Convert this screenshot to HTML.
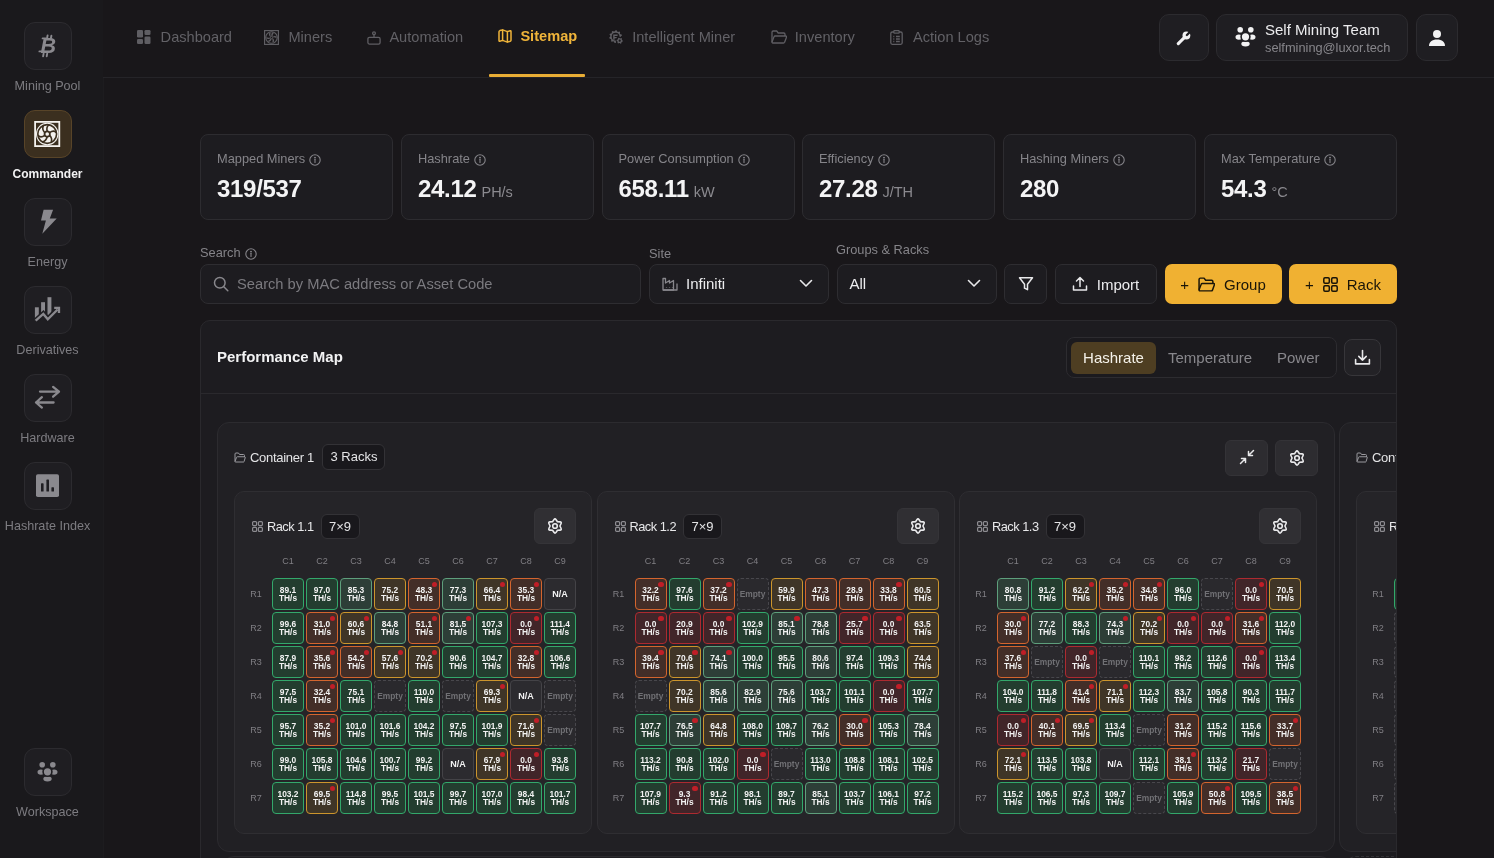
<!DOCTYPE html>
<html><head><meta charset="utf-8">
<style>
*{box-sizing:border-box;margin:0;padding:0}
html,body{width:1494px;height:858px;overflow:hidden;background:#19171a;font-family:"Liberation Sans",sans-serif;color:#e8e8ea}
.abs{position:absolute}
/* sidebar */
#side{position:absolute;left:0;top:0;width:103px;height:858px;background:#1a191c}
#vline{position:absolute;left:103px;top:78px;width:1px;height:780px;background:#1d1c1f}
.si{position:absolute;left:24px;width:48px;height:48px;border-radius:11px;background:#1f1e22;border:1px solid #2c2b2f}
.si.act{background:#3b2f1f;border-color:#584428}
.sl{position:absolute;left:0;width:95px;text-align:center;font-size:12.6px;color:#7d7c81;white-space:nowrap;margin-top:0.5px}
.sl.act{color:#f2f2f3;font-weight:bold;font-size:12px;margin-top:0.5px}
/* topbar */
#top{position:absolute;left:103px;top:0;width:1391px;height:78px;border-bottom:1px solid #252428}
.nav{position:absolute;top:27.6px;height:18px;font-size:14.6px;color:#626166;white-space:nowrap;line-height:18px}
.nav svg{position:absolute;left:0;top:2px}
.nav span{position:absolute;top:0}
.nav.act{color:#efb43a;font-weight:bold}
#uline{position:absolute;left:386px;top:74px;width:96px;height:3px;background:#e9ad35;border-radius:1px}
.tb{position:absolute;top:14px;height:47px;border-radius:10px;background:#1f1e22;border:1px solid #2c2b2f;display:flex;align-items:center;justify-content:center}
/* stats */
.card{position:absolute;top:134px;width:193px;height:86px;border-radius:8px;background:#1d1c20;border:1px solid #2d2c30}
.card .lab{position:absolute;left:16px;top:16px;font-size:12.8px;color:#858489;white-space:nowrap;line-height:15px}
.card .lab svg{vertical-align:-2.5px;margin-left:4px}
.flab svg{vertical-align:-3px}
.card .val{position:absolute;left:16px;top:40px;font-size:24px;font-weight:bold;color:#f4f4f5;white-space:nowrap;line-height:28px;letter-spacing:-0.3px}
.card .val small{font-size:14.5px;font-weight:normal;color:#8b8a8f;margin-left:5px;letter-spacing:-0.1px}
/* form */
.flab{position:absolute;font-size:12.8px;color:#858489;white-space:nowrap;line-height:15px}
.inp{position:absolute;top:264px;height:40px;border-radius:8px;background:#1d1c20;border:1px solid #2e2d31}
.btn{position:absolute;top:264px;height:40px;border-radius:7px;display:flex;align-items:center;justify-content:center;font-size:15px;white-space:nowrap}
.gold{background:#f0b132;color:#1a1508}
/* perf map */
#perf{position:absolute;left:200px;top:320px;width:1197px;height:600px;border-radius:10px;background:#1d1c20;border:1px solid #2a292d;overflow:hidden}
#seg{position:absolute;left:865px;top:16px;width:271px;height:41px;border-radius:8px;border:1px solid #2d2c30;background:#1b1a1e}
#seg .on{position:absolute;left:4px;top:4px;width:85px;height:32px;border-radius:6px;background:#4e3e22;color:#f5f2ea;font-size:15px;text-align:center;line-height:32px}
#seg span{position:absolute;top:4px;line-height:32px;font-size:15px;color:#88878c}
#dl{position:absolute;left:1143px;top:18px;width:37px;height:37px;border-radius:8px;background:#232226;border:1px solid #37363a;display:flex;align-items:center;justify-content:center}
#pdiv{position:absolute;left:0;top:72px;width:100%;height:1px;background:#2a292d}
.cont{position:absolute;top:101px;height:430px;border-radius:12px;background:#212024;border:1px solid #2c2b2f}
.chead{position:absolute;left:16px;top:21px;height:26px;display:flex;align-items:center;white-space:nowrap}
.cname{font-size:13px;color:#e4e4e6;margin-left:4px;letter-spacing:-0.3px}
.badge{display:inline-block;border-radius:6px;background:#19181c;border:1px solid #333236;font-size:13px;color:#e4e4e6;text-align:center}
.cbtn{position:absolute;top:17px;width:43px;height:36px;border-radius:6px;background:#2d2c30;border:1px solid #343337;display:flex;align-items:center;justify-content:center}
.racks{position:absolute;left:16px;top:68px;display:flex;gap:4.5px}
.rack{position:relative;width:358px;height:343px;border-radius:10px;background:#252428;border:1px solid #2f2e32}
.rhead{position:absolute;left:17px;top:21px;height:26px;display:flex;align-items:center;white-space:nowrap;width:324px}
.rname{font-size:12.8px;color:#e8e8ea;margin-left:4px;letter-spacing:-0.5px}
.rb{margin-left:7px;width:39px;height:25px;line-height:23px}
.sbtn{position:absolute;right:0;top:-5px;width:42px;height:36px;border-radius:6px;background:#302f33;border:1px solid #353438;display:flex;align-items:center;justify-content:center}
.grid{position:absolute;left:7px;top:56px;display:grid;grid-template-columns:28px repeat(9,32px);grid-template-rows:28px repeat(7,32px);column-gap:2px;row-gap:2px}
.lbl{font-size:9px;color:#807f84;display:flex;align-items:center;justify-content:center}
.lbl.ch{align-items:flex-start;padding-top:8px;line-height:10px}
.c{position:relative;width:32px;height:32px;border-radius:4px;border:1.3px solid;font-size:8.4px;font-weight:bold;color:#f2f2f2;text-align:center;line-height:8px;padding-top:7.4px;white-space:nowrap}
.c i{position:absolute;right:2px;top:2.8px;width:5.4px;height:5.4px;border-radius:50%;background:#c01e27}
.c.g{background:#233d2f;border-color:#33a86b}
.c.t{background:#2d3e37;border-color:#5e9f7c}
.c.y{background:#3f3527;border-color:#cc952c}
.c.o{background:#432e28;border-color:#d4652e}
.c.r{background:#412529;border-color:#ad2a30}
.c.e{background:#2a292d;border:1.3px dashed #48474c;color:#707074;padding-top:11px}
.c.n{background:#2c2b2f;border-color:#444347;padding-top:11px;font-size:9px}
</style></head><body><div id="root" style="position:absolute;left:0;top:0;width:1494px;height:858px;will-change:transform">

<div id="side">
<div class="si" style="top:22px"><svg style="position:absolute;left:-1px;top:-1px" width="48" height="48" viewBox="0 0 48 48"><text x="16.6" y="31.4" font-family="Liberation Sans" font-weight="bold" font-style="italic" font-size="21.5" fill="#8a898e">B</text><g stroke="#8a898e" stroke-width="1.9" stroke-linecap="round"><path d="M23.6 13.4l-.5 2.6M27.4 13.8l-.5 2.4M19.6 31.6l-.5 2.8M23.2 31.6l-.5 2.6M18.6 16.4h3M15.4 29.4h3"/></g></svg></div>
  <div class="sl" style="top:78px">Mining Pool</div>
<div class="si act" style="top:110px"><svg style="position:absolute;left:-1px;top:-1px" width="48" height="48" viewBox="0 0 48 48"><g transform="translate(10.2 11)"><rect x="0" y="0" width="26" height="26" fill="#f4f2ee"/><rect x="1.8" y="1.8" width="22.4" height="22.4" fill="#3b2f1f"/><circle cx="13" cy="13" r="11.2" fill="#f4f2ee"/><circle cx="13" cy="13" r="9.4" fill="none" stroke="#3b2f1f" stroke-width="1.6"/><g stroke="#3b2f1f" stroke-width="1.6" fill="none" stroke-linecap="round"><path d="M13 10.3C12.2 7.2 12.8 5.2 14.6 3.8"/><path d="M15.4 11.7C18.3 9.6 20.4 9.9 21.9 11.4"/><path d="M15.4 14.3C17.7 16.8 17.9 18.8 17 20.9"/><path d="M13 15.7C12.2 18.8 10.6 20.3 8.5 20.8"/><path d="M10.6 14.3C7.7 16.4 5.6 16.1 4.1 14.6"/><path d="M10.6 11.7C8.3 9.2 8.1 7.2 9 5.1"/></g><circle cx="13" cy="13" r="2.7" fill="none" stroke="#3b2f1f" stroke-width="1.7"/></g></svg></div>
  <div class="sl act" style="top:166px">Commander</div>
<div class="si" style="top:198px"><svg style="position:absolute;left:-1px;top:-1px" width="48" height="48" viewBox="0 0 48 48"><path d="M19.6 11.8h9.5l-3.3 8.6h6.9L18.3 35.8l3.6-13.2h-4.9z" fill="#8a898e"/></svg></div>
  <div class="sl" style="top:254px">Energy</div>
<div class="si" style="top:286px"><svg style="position:absolute;left:-1px;top:-1px" width="48" height="48" viewBox="0 0 48 48"><g fill="#8a898e"><rect x="10.9" y="21.3" width="3.9" height="13"/><rect x="17.1" y="16.2" width="3.9" height="14"/><rect x="23.5" y="11.2" width="3.9" height="18"/></g><path d="M11.7 34.7L19.3 28l4.5 5.3 9.8-9.8" stroke="#1f1e22" stroke-width="5.5" fill="none" stroke-linejoin="miter"/><path d="M11.7 34.7L19.3 28l4.5 5.3 9.8-9.8" stroke="#8a898e" stroke-width="2.3" fill="none" stroke-linejoin="miter"/><path d="M30.2 21.8H35v5.1" stroke="#8a898e" stroke-width="2.3" fill="none"/></svg></div>
  <div class="sl" style="top:342px">Derivatives</div>
<div class="si" style="top:374px"><svg style="position:absolute;left:-1px;top:-1px" width="48" height="48" viewBox="0 0 48 48"><g stroke="#8a898e" stroke-width="2.3" fill="none" stroke-linecap="round" stroke-linejoin="round"><path d="M16 17.6h19M29.1 12.9L35 17.6l-5.9 5.1"/><path d="M29.6 28.5H12M17.9 23.2L12 28.5l5.9 5.1"/></g></svg></div>
  <div class="sl" style="top:430px">Hardware</div>
<div class="si" style="top:462px"><svg style="position:absolute;left:-1px;top:-1px" width="48" height="48" viewBox="0 0 48 48"><rect x="12" y="12.3" width="23" height="22.7" rx="1.8" fill="#8a898e"/><g fill="#1f1e22"><rect x="17" y="21.3" width="2.6" height="8.3" rx="0.6"/><rect x="22.4" y="17.6" width="2.6" height="12" rx="0.6"/><rect x="27.4" y="25.2" width="2.6" height="4.4" rx="0.6"/></g></svg></div>
  <div class="sl" style="top:518px">Hashrate Index</div>
<div class="si" style="top:748px"><svg style="position:absolute;left:-1px;top:-1px" width="48" height="48" viewBox="0 0 48 48"><g fill="#8a898e"><circle cx="18.2" cy="16.8" r="2.8"/><circle cx="28.8" cy="16.8" r="2.8"/><ellipse cx="16.9" cy="24.1" rx="3.4" ry="2.7"/><ellipse cx="30.1" cy="24.1" rx="3.4" ry="2.7"/><ellipse cx="23.5" cy="30.8" rx="4.2" ry="2.6"/><circle cx="23.5" cy="23.8" r="4.4" stroke="#1f1e22" stroke-width="1.6"/></g></svg></div>
  <div class="sl" style="top:804px">Workspace</div>
</div>

<div id="vline"></div>
<div id="top">
  <div class="nav" style="left:34px"><svg width="14" height="14" viewBox="0 0 14 14" fill="#5f5e63"><rect x="0" y="0" width="6" height="7.5" rx="1.3"/><rect x="7.5" y="0" width="6" height="5" rx="1.3"/><rect x="0" y="9" width="6" height="5" rx="1.3"/><rect x="7.5" y="6.5" width="6" height="7.5" rx="1.3"/></svg><span style="left:23.6px">Dashboard</span></div>
  <div class="nav" style="left:161px"><svg style="top:2.5px" width="15" height="15" viewBox="0 0 26 26"><g fill="none" stroke="#5f5e63"><rect x="1" y="1" width="24" height="24" stroke-width="2"/><circle cx="13" cy="13" r="10" stroke-width="2"/></g><g fill="#5f5e63"><path d="M13 10.5C12.2 7.4 12.8 5.4 14.8 4.2L17 5.2C15.5 7 14.8 8.8 14.7 10.8z"/><path d="M15.2 11.8C18 9.6 20.2 9.9 21.8 11.6L21.3 14C19.6 12.7 17.8 12.3 15.6 12.7z"/><path d="M15.4 14.2C17.7 16.8 17.8 18.8 16.8 20.8L14.5 21.2C15.2 19.2 15.1 17.2 14.4 15.2z"/><path d="M13 15.5C12.2 18.6 10.6 20.1 8.4 20.6L6.8 19C8.9 18.2 10.4 17 11.3 15.3z"/><path d="M10.8 14.2C7.9 16.3 5.8 16 4.2 14.4L4.7 12C6.4 13.3 8.2 13.7 10.4 13.3z"/><path d="M10.6 11.8C8.3 9.2 8.2 7.2 9.2 5.2L11.5 4.8C10.8 6.8 10.9 8.8 11.6 10.8z"/></g><circle cx="13" cy="13" r="2" fill="none" stroke="#5f5e63" stroke-width="1.6"/></svg><span style="left:24.4px">Miners</span></div>
  <div class="nav" style="left:263px"><svg style="top:3.4px;left:0.8px" width="14" height="14" viewBox="0 0 14 14" fill="none" stroke="#5f5e63" stroke-width="1.3" stroke-linejoin="round"><rect x="0.9" y="6.3" width="12.2" height="6.8" rx="1.6"/><path d="M7 6.3V3.4"/><circle cx="7" cy="2.2" r="1.4"/></svg><span style="left:23.4px">Automation</span></div>
  <div class="nav act" style="left:394px;top:26.8px"><svg style="top:2.6px;left:0.8px" width="14" height="14" viewBox="0 0 14 14" fill="none" stroke="#efb43a" stroke-width="1.5" stroke-linejoin="round" stroke-linecap="round"><path d="M1 2.8Q1 1.9 1.9 1.6L4.6 0.9 9.4 2.6 12.2 1.8Q13 1.6 13 2.5V11.2Q13 12 12.2 12.3L9.4 13.1 4.6 11.4 1.8 12.2Q1 12.4 1 11.6z"/><path d="M4.6 0.9v10.5M9.4 2.6v10.5"/></svg><span style="left:23.4px">Sitemap</span></div>
  <div class="nav" style="left:506px"><svg style="top:2.5px" width="14" height="14" viewBox="0 0 14 14"><path d="M6.60 0.20 L7.60 0.28 L8.24 1.56 L9.01 1.88 L10.36 1.42 L11.13 2.07 L10.89 3.48 L11.32 4.19 L12.69 4.62 L12.92 5.60 L11.90 6.60 L11.83 7.43 L12.69 8.58 L12.30 9.51 L10.89 9.72 L10.35 10.35 L10.36 11.78 L9.51 12.30 L8.24 11.64 L7.43 11.83 L6.60 13.00 L5.60 12.92 L4.96 11.64 L4.19 11.32 L2.84 11.78 L2.07 11.13 L2.31 9.72 L1.88 9.01 L0.51 8.58 L0.28 7.60 L1.30 6.60 L1.37 5.77 L0.51 4.62 L0.90 3.69 L2.31 3.48 L2.85 2.85 L2.84 1.42 L3.69 0.90 L4.96 1.56 L5.77 1.37Z" fill="#5f5e63"/><circle cx="6.6" cy="6.6" r="3.9" fill="#19171a"/><path d="M4.2 4.6h4.4v1.3H5.6v1.1h2.2v1.2H5.6v1.6H4.2z" fill="#5f5e63"/><circle cx="10.7" cy="10.7" r="3.9" fill="#19171a"/><path d="M13.80 10.70 L13.69 11.50 L12.78 11.90 L12.40 12.40 L12.25 13.38 L11.50 13.69 L10.70 13.10 L10.08 13.02 L9.15 13.38 L8.51 12.89 L8.62 11.90 L8.38 11.32 L7.60 10.70 L7.71 9.90 L8.62 9.50 L9.00 9.00 L9.15 8.02 L9.90 7.71 L10.70 8.30 L11.32 8.38 L12.25 8.02 L12.89 8.51 L12.78 9.50 L13.02 10.08Z" fill="#5f5e63"/><circle cx="10.7" cy="10.7" r="1.1" fill="#19171a"/></svg><span style="left:23.2px">Intelligent Miner</span></div>
  <div class="nav" style="left:668px"><svg width="16" height="14" viewBox="0 0 16 14" fill="none" stroke="#5f5e63" stroke-width="1.3" stroke-linejoin="round"><path d="M1 12V2.2A1.2 1.2 0 012.2 1h3.5l1.5 2h5.6A1.2 1.2 0 0114 4.2V6"/><path d="M1 12l2-5.2A1.2 1.2 0 014.1 6h10.6a.8.8 0 01.8 1.1L13.6 12.3a1.2 1.2 0 01-1.1.7H1.8A.8.8 0 011 12z"/></svg><span style="left:23.8px">Inventory</span></div>
  <div class="nav" style="left:787px"><svg width="13" height="15" viewBox="0 0 13 15" fill="none" stroke="#5f5e63" stroke-width="1.3"><rect x="0.8" y="2" width="11.4" height="12.3" rx="1.5"/><rect x="3.8" y="0.6" width="5.4" height="2.6" rx="0.8" fill="#19181b"/><path d="M3.3 6.5h1M6 6.5h3.8M3.3 9h1M6 9h3.8M3.3 11.5h1M6 11.5h3.8"/></svg><span style="left:23px">Action Logs</span></div>
  <div id="uline"></div>
  <div class="tb" style="left:1056px;width:50px"><svg width="16" height="16" viewBox="0 0 16 16"><path d="M2.3 13.6L9.6 6.3" stroke="#f2f2f3" stroke-width="3.1" stroke-linecap="round"/><circle cx="10.4" cy="5.5" r="3.9" fill="#f2f2f3"/><path d="M10.9 5L15 0.9" stroke="#1f1e22" stroke-width="2.3" stroke-linecap="round"/></svg></div>
  <div class="tb" style="left:1113px;width:192px;justify-content:flex-start"><svg style="position:absolute;left:18px;top:12px" width="21" height="20" viewBox="13 14 21 20"><g fill="#f2f2f3"><circle cx="18.2" cy="16.8" r="2.8"/><circle cx="28.8" cy="16.8" r="2.8"/><ellipse cx="16.9" cy="24.1" rx="3.4" ry="2.7"/><ellipse cx="30.1" cy="24.1" rx="3.4" ry="2.7"/><ellipse cx="23.5" cy="30.8" rx="4.2" ry="2.6"/><circle cx="23.5" cy="23.8" r="4.4" stroke="#1f1e22" stroke-width="1.6"/></g></svg><div style="position:absolute;left:48px;top:6px;font-size:15px;color:#ececee;white-space:nowrap;line-height:18px">Self Mining Team</div><div style="position:absolute;left:48px;top:25px;font-size:12.8px;color:#87868b;white-space:nowrap;line-height:16px">selfmining@luxor.tech</div></div>
  <div class="tb" style="left:1313px;width:42px"><svg width="18" height="18" viewBox="0 0 18 18" fill="#f2f2f3"><circle cx="9" cy="5" r="4"/><path d="M1 17c0-4 3-6.5 8-6.5s8 2.5 8 6.5z"/></svg></div>
</div>

<!-- stat cards -->
<div class="card" style="left:200px"><div class="lab">Mapped Miners<svg width="12" height="12" viewBox="0 0 12 12" fill="none" stroke="#858489" stroke-width="1.1"><circle cx="6" cy="6" r="5.2"/><path d="M6 5.3v3.2" stroke-linecap="round"/><circle cx="6" cy="3.6" r="0.4" fill="#858489"/></svg></div><div class="val">319/537</div></div>
<div class="card" style="left:401px"><div class="lab">Hashrate<svg width="12" height="12" viewBox="0 0 12 12" fill="none" stroke="#858489" stroke-width="1.1"><circle cx="6" cy="6" r="5.2"/><path d="M6 5.3v3.2" stroke-linecap="round"/><circle cx="6" cy="3.6" r="0.4" fill="#858489"/></svg></div><div class="val">24.12<small>PH/s</small></div></div>
<div class="card" style="left:601.5px"><div class="lab">Power Consumption<svg width="12" height="12" viewBox="0 0 12 12" fill="none" stroke="#858489" stroke-width="1.1"><circle cx="6" cy="6" r="5.2"/><path d="M6 5.3v3.2" stroke-linecap="round"/><circle cx="6" cy="3.6" r="0.4" fill="#858489"/></svg></div><div class="val">658.11<small>kW</small></div></div>
<div class="card" style="left:802px"><div class="lab">Efficiency<svg width="12" height="12" viewBox="0 0 12 12" fill="none" stroke="#858489" stroke-width="1.1"><circle cx="6" cy="6" r="5.2"/><path d="M6 5.3v3.2" stroke-linecap="round"/><circle cx="6" cy="3.6" r="0.4" fill="#858489"/></svg></div><div class="val">27.28<small>J/TH</small></div></div>
<div class="card" style="left:1003px"><div class="lab">Hashing Miners<svg width="12" height="12" viewBox="0 0 12 12" fill="none" stroke="#858489" stroke-width="1.1"><circle cx="6" cy="6" r="5.2"/><path d="M6 5.3v3.2" stroke-linecap="round"/><circle cx="6" cy="3.6" r="0.4" fill="#858489"/></svg></div><div class="val">280</div></div>
<div class="card" style="left:1204px"><div class="lab">Max Temperature<svg width="12" height="12" viewBox="0 0 12 12" fill="none" stroke="#858489" stroke-width="1.1"><circle cx="6" cy="6" r="5.2"/><path d="M6 5.3v3.2" stroke-linecap="round"/><circle cx="6" cy="3.6" r="0.4" fill="#858489"/></svg></div><div class="val">54.3<small>°C</small></div></div>

<!-- form row -->
<div class="flab" style="left:200px;top:245px">Search<span style="margin-left:4px"></span><svg width="12" height="12" viewBox="0 0 12 12" fill="none" stroke="#858489" stroke-width="1.1"><circle cx="6" cy="6" r="5.2"/><path d="M6 5.3v3.2" stroke-linecap="round"/><circle cx="6" cy="3.6" r="0.4" fill="#858489"/></svg></div>
<div class="flab" style="left:649px;top:246px">Site</div>
<div class="flab" style="left:836px;top:242px">Groups &amp; Racks</div>
<div class="inp" style="left:200px;width:441px"><svg style="position:absolute;left:12px;top:11px" width="16" height="16" viewBox="0 0 16 16" fill="none" stroke="#88878c" stroke-width="1.5"><circle cx="6.8" cy="6.8" r="5.3"/><path d="M10.8 10.8l4 4" stroke-linecap="round"/></svg><div style="position:absolute;left:36px;top:10px;font-size:14.7px;color:#7b7a7f;white-space:nowrap;line-height:18px">Search by MAC address or Asset Code</div></div>
<div class="inp" style="left:649px;width:180px"><svg style="position:absolute;left:12px;top:12px" width="16" height="14" viewBox="0 0 16 14" fill="none" stroke="#88878c" stroke-width="1.3" stroke-linejoin="round"><path d="M1 13V1.5h2.5V6l4-2.5V6l4-2.5V13z"/><path d="M1 13h14V6.5"/><path d="M4.5 10.5v.5M7.5 10.5v.5M10.5 10.5v.5"/></svg><div style="position:absolute;left:36px;top:10px;font-size:15px;color:#ececee;line-height:18px">Infiniti</div><svg style="position:absolute;left:149px;top:14px" width="14" height="9" viewBox="0 0 14 9" fill="none" stroke="#e8e8ea" stroke-width="1.6" stroke-linecap="round" stroke-linejoin="round"><path d="M1.5 1.5L7 7l5.5-5.5"/></svg></div>
<div class="inp" style="left:836.5px;width:160px"><div style="position:absolute;left:12px;top:10px;font-size:15px;color:#ececee;line-height:18px">All</div><svg style="position:absolute;left:129px;top:14px" width="14" height="9" viewBox="0 0 14 9" fill="none" stroke="#e8e8ea" stroke-width="1.6" stroke-linecap="round" stroke-linejoin="round"><path d="M1.5 1.5L7 7l5.5-5.5"/></svg></div>
<div class="btn" style="left:1004px;width:43px;background:#1d1c20;border:1px solid #2e2d31"><svg width="16" height="16" viewBox="0 0 16 16" fill="none" stroke="#e8e8ea" stroke-width="1.5" stroke-linejoin="round"><path d="M1.5 1.8h13L9.5 8.2v5.5l-3-1.5V8.2z"/></svg></div>
<div class="btn" style="left:1054.5px;width:102px;background:#1d1c20;border:1px solid #2e2d31;color:#ececee"><svg width="16" height="16" viewBox="0 0 16 16" fill="none" stroke="#e8e8ea" stroke-width="1.5" stroke-linecap="round" stroke-linejoin="round"><path d="M8 10.5V1.5M4.5 5L8 1.5 11.5 5M1.5 10v4h13v-4"/></svg><span style="margin-left:9px">Import</span></div>
<div class="btn gold" style="left:1164.5px;width:117px">+<svg style="margin-left:9px" width="17" height="15" viewBox="0 0 16 14" fill="none" stroke="#1a1508" stroke-width="1.4" stroke-linejoin="round"><path d="M1 12V2.2A1.2 1.2 0 012.2 1h3.5l1.5 2h5.6A1.2 1.2 0 0114 4.2V6"/><path d="M1 12l2-5.2A1.2 1.2 0 014.1 6h10.6a.8.8 0 01.8 1.1L13.6 12.3a1.2 1.2 0 01-1.1.7H1.8A.8.8 0 011 12z"/></svg><span style="margin-left:9px">Group</span></div>
<div class="btn gold" style="left:1289px;width:108px">+<svg style="margin-left:9px" width="15" height="15" viewBox="0 0 15 15" fill="none" stroke="#1a1508" stroke-width="1.5"><rect x="0.8" y="0.8" width="5.5" height="5.5" rx="1.2"/><rect x="8.7" y="0.8" width="5.5" height="5.5" rx="1.2"/><rect x="0.8" y="8.7" width="5.5" height="5.5" rx="1.2"/><rect x="8.7" y="8.7" width="5.5" height="5.5" rx="1.2"/></svg><span style="margin-left:9px">Rack</span></div>

<!-- performance map -->
<div id="perf">
  <div style="position:absolute;left:16px;top:27px;font-size:15px;font-weight:bold;color:#f2f2f3;white-space:nowrap;line-height:18px">Performance Map</div>
  <div id="seg"><div class="on">Hashrate</div><span style="left:101px">Temperature</span><span style="left:210px">Power</span></div>
  <div id="dl"><svg width="17" height="17" viewBox="0 0 16 16" fill="none" stroke="#e8e8ea" stroke-width="1.5" stroke-linecap="round" stroke-linejoin="round"><path d="M8 1.5v9M4.5 7L8 10.5 11.5 7M1.5 10v4h13v-4"/></svg></div>
  <div id="pdiv"></div>

  <div class="cont" style="left:16px;width:1118px">
    <div class="chead"><svg width="12" height="11" viewBox="0 0 24 22" fill="none" stroke="#9a999e" stroke-width="2" stroke-linejoin="round"><path d="M2 19V4a2 2 0 012-2h5l2 3h8a2 2 0 012 2v3"/><path d="M2 19l3-8a2 2 0 012-1.5h14a1.5 1.5 0 011.4 2L20 19.5a1 1 0 01-1 .5H3a1 1 0 01-1-1z"/></svg><span class="cname">Container 1</span><span class="badge" style="margin-left:8.5px;width:63px;height:26px;line-height:24px">3 Racks</span></div>
    <div class="cbtn" style="left:1007px"><svg style="margin-top:-1.5px" width="16" height="16" viewBox="0 0 16 16" fill="none" stroke="#e8e8ea" stroke-width="1.5" stroke-linecap="round" stroke-linejoin="round"><path d="M14.5 1.5L9.5 6.5M9.5 2.5v4h4M1.5 14.5l5-5M2.5 9.5h4v4"/></svg></div>
    <div class="cbtn" style="left:1057px"><svg width="20" height="20" viewBox="2 2 20 20" fill="none" stroke="#ebebed" stroke-width="1.6" stroke-linejoin="round"><path d="M10.94 5.68Q12.00 4.10 13.06 5.68L14.45 7.76L16.95 7.92Q18.84 8.05 18.00 9.76L16.90 12.00L18.00 14.24Q18.84 15.95 16.95 16.08L14.45 16.24L13.06 18.32Q12.00 19.90 10.94 18.32L9.55 16.24L7.05 16.08Q5.16 15.95 6.00 14.24L7.10 12.00L6.00 9.76Q5.16 8.05 7.05 7.92L9.55 7.76Z"/><circle cx="12" cy="12" r="2.3"/></svg></div>
    <div class="racks"><div class="rack"><div class="rhead"><svg width="11" height="11" viewBox="0 0 11 11" fill="none" stroke="#8d8c91" stroke-width="1.2"><rect x="0.6" y="0.6" width="4" height="4" rx="1"/><rect x="6.4" y="0.6" width="4" height="4" rx="1"/><rect x="0.6" y="6.4" width="4" height="4" rx="1"/><rect x="6.4" y="6.4" width="4" height="4" rx="1"/></svg><span class="rname">Rack 1.1</span><span class="badge rb">7×9</span><div class="sbtn"><svg width="20" height="20" viewBox="2 2 20 20" fill="none" stroke="#ebebed" stroke-width="1.6" stroke-linejoin="round"><path d="M10.94 5.68Q12.00 4.10 13.06 5.68L14.45 7.76L16.95 7.92Q18.84 8.05 18.00 9.76L16.90 12.00L18.00 14.24Q18.84 15.95 16.95 16.08L14.45 16.24L13.06 18.32Q12.00 19.90 10.94 18.32L9.55 16.24L7.05 16.08Q5.16 15.95 6.00 14.24L7.10 12.00L6.00 9.76Q5.16 8.05 7.05 7.92L9.55 7.76Z"/><circle cx="12" cy="12" r="2.3"/></svg></div></div><div class="grid"><div class="lbl"></div><div class="lbl ch">C1</div><div class="lbl ch">C2</div><div class="lbl ch">C3</div><div class="lbl ch">C4</div><div class="lbl ch">C5</div><div class="lbl ch">C6</div><div class="lbl ch">C7</div><div class="lbl ch">C8</div><div class="lbl ch">C9</div><div class="lbl rh">R1</div><div class="c g">89.1<br>TH/s</div><div class="c g">97.0<br>TH/s</div><div class="c t">85.3<br>TH/s</div><div class="c y">75.2<br>TH/s</div><div class="c o"><i></i>48.3<br>TH/s</div><div class="c t">77.3<br>TH/s</div><div class="c y"><i></i>66.4<br>TH/s</div><div class="c o"><i></i>35.3<br>TH/s</div><div class="c n">N/A</div><div class="lbl rh">R2</div><div class="c g">99.6<br>TH/s</div><div class="c o"><i></i>31.0<br>TH/s</div><div class="c y"><i></i>60.6<br>TH/s</div><div class="c t">84.8<br>TH/s</div><div class="c o"><i></i>51.1<br>TH/s</div><div class="c t"><i></i>81.5<br>TH/s</div><div class="c g">107.3<br>TH/s</div><div class="c r"><i></i>0.0<br>TH/s</div><div class="c g">111.4<br>TH/s</div><div class="lbl rh">R3</div><div class="c g">87.9<br>TH/s</div><div class="c o"><i></i>35.6<br>TH/s</div><div class="c o"><i></i>54.2<br>TH/s</div><div class="c y"><i></i>57.6<br>TH/s</div><div class="c y"><i></i>70.2<br>TH/s</div><div class="c g">90.6<br>TH/s</div><div class="c g">104.7<br>TH/s</div><div class="c o"><i></i>32.8<br>TH/s</div><div class="c g">106.6<br>TH/s</div><div class="lbl rh">R4</div><div class="c g">97.5<br>TH/s</div><div class="c o"><i></i>32.4<br>TH/s</div><div class="c g">75.1<br>TH/s</div><div class="c e">Empty</div><div class="c g">110.0<br>TH/s</div><div class="c e">Empty</div><div class="c y"><i></i>69.3<br>TH/s</div><div class="c n">N/A</div><div class="c e">Empty</div><div class="lbl rh">R5</div><div class="c g">95.7<br>TH/s</div><div class="c o"><i></i>35.2<br>TH/s</div><div class="c g">101.0<br>TH/s</div><div class="c g">101.6<br>TH/s</div><div class="c g">104.2<br>TH/s</div><div class="c g">97.5<br>TH/s</div><div class="c g">101.9<br>TH/s</div><div class="c y"><i></i>71.6<br>TH/s</div><div class="c e">Empty</div><div class="lbl rh">R6</div><div class="c g">99.0<br>TH/s</div><div class="c g">105.8<br>TH/s</div><div class="c g">104.6<br>TH/s</div><div class="c g">100.7<br>TH/s</div><div class="c g">99.2<br>TH/s</div><div class="c n">N/A</div><div class="c y"><i></i>67.9<br>TH/s</div><div class="c r"><i></i>0.0<br>TH/s</div><div class="c g">93.8<br>TH/s</div><div class="lbl rh">R7</div><div class="c g">103.2<br>TH/s</div><div class="c y"><i></i>69.5<br>TH/s</div><div class="c g">114.8<br>TH/s</div><div class="c g">99.5<br>TH/s</div><div class="c g">101.5<br>TH/s</div><div class="c g">99.7<br>TH/s</div><div class="c g">107.0<br>TH/s</div><div class="c g">98.4<br>TH/s</div><div class="c g">101.7<br>TH/s</div></div></div><div class="rack"><div class="rhead"><svg width="11" height="11" viewBox="0 0 11 11" fill="none" stroke="#8d8c91" stroke-width="1.2"><rect x="0.6" y="0.6" width="4" height="4" rx="1"/><rect x="6.4" y="0.6" width="4" height="4" rx="1"/><rect x="0.6" y="6.4" width="4" height="4" rx="1"/><rect x="6.4" y="6.4" width="4" height="4" rx="1"/></svg><span class="rname">Rack 1.2</span><span class="badge rb">7×9</span><div class="sbtn"><svg width="20" height="20" viewBox="2 2 20 20" fill="none" stroke="#ebebed" stroke-width="1.6" stroke-linejoin="round"><path d="M10.94 5.68Q12.00 4.10 13.06 5.68L14.45 7.76L16.95 7.92Q18.84 8.05 18.00 9.76L16.90 12.00L18.00 14.24Q18.84 15.95 16.95 16.08L14.45 16.24L13.06 18.32Q12.00 19.90 10.94 18.32L9.55 16.24L7.05 16.08Q5.16 15.95 6.00 14.24L7.10 12.00L6.00 9.76Q5.16 8.05 7.05 7.92L9.55 7.76Z"/><circle cx="12" cy="12" r="2.3"/></svg></div></div><div class="grid"><div class="lbl"></div><div class="lbl ch">C1</div><div class="lbl ch">C2</div><div class="lbl ch">C3</div><div class="lbl ch">C4</div><div class="lbl ch">C5</div><div class="lbl ch">C6</div><div class="lbl ch">C7</div><div class="lbl ch">C8</div><div class="lbl ch">C9</div><div class="lbl rh">R1</div><div class="c o"><i></i>32.2<br>TH/s</div><div class="c g">97.6<br>TH/s</div><div class="c o"><i></i>37.2<br>TH/s</div><div class="c e">Empty</div><div class="c y">59.9<br>TH/s</div><div class="c o">47.3<br>TH/s</div><div class="c o">28.9<br>TH/s</div><div class="c o"><i></i>33.8<br>TH/s</div><div class="c y">60.5<br>TH/s</div><div class="lbl rh">R2</div><div class="c r"><i></i>0.0<br>TH/s</div><div class="c r">20.9<br>TH/s</div><div class="c r"><i></i>0.0<br>TH/s</div><div class="c g">102.9<br>TH/s</div><div class="c t"><i></i>85.1<br>TH/s</div><div class="c t">78.8<br>TH/s</div><div class="c r"><i></i>25.7<br>TH/s</div><div class="c r"><i></i>0.0<br>TH/s</div><div class="c y">63.5<br>TH/s</div><div class="lbl rh">R3</div><div class="c o"><i></i>39.4<br>TH/s</div><div class="c y"><i></i>70.6<br>TH/s</div><div class="c t"><i></i>74.1<br>TH/s</div><div class="c g">100.0<br>TH/s</div><div class="c g">95.5<br>TH/s</div><div class="c t">80.6<br>TH/s</div><div class="c g">97.4<br>TH/s</div><div class="c g">109.3<br>TH/s</div><div class="c y">74.4<br>TH/s</div><div class="lbl rh">R4</div><div class="c e">Empty</div><div class="c y">70.2<br>TH/s</div><div class="c t">85.6<br>TH/s</div><div class="c t">82.9<br>TH/s</div><div class="c t">75.6<br>TH/s</div><div class="c g">103.7<br>TH/s</div><div class="c g">101.1<br>TH/s</div><div class="c r"><i></i>0.0<br>TH/s</div><div class="c g">107.7<br>TH/s</div><div class="lbl rh">R5</div><div class="c g">107.7<br>TH/s</div><div class="c t"><i></i>76.5<br>TH/s</div><div class="c y">64.8<br>TH/s</div><div class="c g">108.0<br>TH/s</div><div class="c g">109.7<br>TH/s</div><div class="c t">76.2<br>TH/s</div><div class="c o"><i></i>30.0<br>TH/s</div><div class="c g">105.3<br>TH/s</div><div class="c t">78.4<br>TH/s</div><div class="lbl rh">R6</div><div class="c g">113.2<br>TH/s</div><div class="c g">90.8<br>TH/s</div><div class="c g">102.0<br>TH/s</div><div class="c r"><i></i>0.0<br>TH/s</div><div class="c e">Empty</div><div class="c g">113.0<br>TH/s</div><div class="c g">108.8<br>TH/s</div><div class="c g">108.1<br>TH/s</div><div class="c g">102.5<br>TH/s</div><div class="lbl rh">R7</div><div class="c g">107.9<br>TH/s</div><div class="c r"><i></i>9.3<br>TH/s</div><div class="c g">91.2<br>TH/s</div><div class="c g">98.1<br>TH/s</div><div class="c g">89.7<br>TH/s</div><div class="c t">85.1<br>TH/s</div><div class="c g">103.7<br>TH/s</div><div class="c g">106.1<br>TH/s</div><div class="c g">97.2<br>TH/s</div></div></div><div class="rack"><div class="rhead"><svg width="11" height="11" viewBox="0 0 11 11" fill="none" stroke="#8d8c91" stroke-width="1.2"><rect x="0.6" y="0.6" width="4" height="4" rx="1"/><rect x="6.4" y="0.6" width="4" height="4" rx="1"/><rect x="0.6" y="6.4" width="4" height="4" rx="1"/><rect x="6.4" y="6.4" width="4" height="4" rx="1"/></svg><span class="rname">Rack 1.3</span><span class="badge rb">7×9</span><div class="sbtn"><svg width="20" height="20" viewBox="2 2 20 20" fill="none" stroke="#ebebed" stroke-width="1.6" stroke-linejoin="round"><path d="M10.94 5.68Q12.00 4.10 13.06 5.68L14.45 7.76L16.95 7.92Q18.84 8.05 18.00 9.76L16.90 12.00L18.00 14.24Q18.84 15.95 16.95 16.08L14.45 16.24L13.06 18.32Q12.00 19.90 10.94 18.32L9.55 16.24L7.05 16.08Q5.16 15.95 6.00 14.24L7.10 12.00L6.00 9.76Q5.16 8.05 7.05 7.92L9.55 7.76Z"/><circle cx="12" cy="12" r="2.3"/></svg></div></div><div class="grid"><div class="lbl"></div><div class="lbl ch">C1</div><div class="lbl ch">C2</div><div class="lbl ch">C3</div><div class="lbl ch">C4</div><div class="lbl ch">C5</div><div class="lbl ch">C6</div><div class="lbl ch">C7</div><div class="lbl ch">C8</div><div class="lbl ch">C9</div><div class="lbl rh">R1</div><div class="c t">80.8<br>TH/s</div><div class="c g">91.2<br>TH/s</div><div class="c y"><i></i>62.2<br>TH/s</div><div class="c o"><i></i>35.2<br>TH/s</div><div class="c o"><i></i>34.8<br>TH/s</div><div class="c g">96.0<br>TH/s</div><div class="c e">Empty</div><div class="c r"><i></i>0.0<br>TH/s</div><div class="c y">70.5<br>TH/s</div><div class="lbl rh">R2</div><div class="c o"><i></i>30.0<br>TH/s</div><div class="c t">77.2<br>TH/s</div><div class="c g">88.3<br>TH/s</div><div class="c t"><i></i>74.3<br>TH/s</div><div class="c y"><i></i>70.2<br>TH/s</div><div class="c r"><i></i>0.0<br>TH/s</div><div class="c r"><i></i>0.0<br>TH/s</div><div class="c o"><i></i>31.6<br>TH/s</div><div class="c g">112.0<br>TH/s</div><div class="lbl rh">R3</div><div class="c o"><i></i>37.6<br>TH/s</div><div class="c e">Empty</div><div class="c r"><i></i>0.0<br>TH/s</div><div class="c e">Empty</div><div class="c g">110.1<br>TH/s</div><div class="c g">98.2<br>TH/s</div><div class="c g">112.6<br>TH/s</div><div class="c r"><i></i>0.0<br>TH/s</div><div class="c g">113.4<br>TH/s</div><div class="lbl rh">R4</div><div class="c g">104.0<br>TH/s</div><div class="c g">111.8<br>TH/s</div><div class="c o"><i></i>41.4<br>TH/s</div><div class="c y"><i></i>71.1<br>TH/s</div><div class="c g">112.3<br>TH/s</div><div class="c t">83.7<br>TH/s</div><div class="c g">105.8<br>TH/s</div><div class="c g">90.3<br>TH/s</div><div class="c g">111.7<br>TH/s</div><div class="lbl rh">R5</div><div class="c r"><i></i>0.0<br>TH/s</div><div class="c o"><i></i>40.1<br>TH/s</div><div class="c y"><i></i>69.5<br>TH/s</div><div class="c g">113.4<br>TH/s</div><div class="c e">Empty</div><div class="c o">31.2<br>TH/s</div><div class="c g">115.2<br>TH/s</div><div class="c g">115.6<br>TH/s</div><div class="c o"><i></i>33.7<br>TH/s</div><div class="lbl rh">R6</div><div class="c y"><i></i>72.1<br>TH/s</div><div class="c g">113.5<br>TH/s</div><div class="c g">103.8<br>TH/s</div><div class="c n">N/A</div><div class="c g">112.1<br>TH/s</div><div class="c o"><i></i>38.1<br>TH/s</div><div class="c g">113.2<br>TH/s</div><div class="c r">21.7<br>TH/s</div><div class="c e">Empty</div><div class="lbl rh">R7</div><div class="c g">115.2<br>TH/s</div><div class="c g">106.5<br>TH/s</div><div class="c g">97.3<br>TH/s</div><div class="c g">109.7<br>TH/s</div><div class="c e">Empty</div><div class="c g">105.9<br>TH/s</div><div class="c o"><i></i>50.8<br>TH/s</div><div class="c g">109.5<br>TH/s</div><div class="c o"><i></i>38.5<br>TH/s</div></div></div></div>
  </div>
  <div class="cont" style="left:1138px;width:400px">
    <div class="chead"><svg width="12" height="11" viewBox="0 0 24 22" fill="none" stroke="#9a999e" stroke-width="2" stroke-linejoin="round"><path d="M2 19V4a2 2 0 012-2h5l2 3h8a2 2 0 012 2v3"/><path d="M2 19l3-8a2 2 0 012-1.5h14a1.5 1.5 0 011.4 2L20 19.5a1 1 0 01-1 .5H3a1 1 0 01-1-1z"/></svg><span class="cname">Container 2</span></div>
    <div class="racks"><div class="rack"><div class="rhead"><svg width="11" height="11" viewBox="0 0 11 11" fill="none" stroke="#8d8c91" stroke-width="1.2"><rect x="0.6" y="0.6" width="4" height="4" rx="1"/><rect x="6.4" y="0.6" width="4" height="4" rx="1"/><rect x="0.6" y="6.4" width="4" height="4" rx="1"/><rect x="6.4" y="6.4" width="4" height="4" rx="1"/></svg><span class="rname">Rack 2.1</span></div><div class="grid"><div class="lbl"></div><div class="lbl ch">C1</div><div class="lbl ch">C2</div><div class="lbl ch">C3</div><div class="lbl ch">C4</div><div class="lbl ch">C5</div><div class="lbl ch">C6</div><div class="lbl ch">C7</div><div class="lbl ch">C8</div><div class="lbl ch">C9</div><div class="lbl rh">R1</div><div class="c g">98.2<br>TH/s</div><div class="c e">Empty</div><div class="c e">Empty</div><div class="c e">Empty</div><div class="c e">Empty</div><div class="c e">Empty</div><div class="c e">Empty</div><div class="c e">Empty</div><div class="c e">Empty</div><div class="lbl rh">R2</div><div class="c e">Empty</div><div class="c e">Empty</div><div class="c e">Empty</div><div class="c e">Empty</div><div class="c e">Empty</div><div class="c e">Empty</div><div class="c e">Empty</div><div class="c e">Empty</div><div class="c e">Empty</div><div class="lbl rh">R3</div><div class="c e">Empty</div><div class="c e">Empty</div><div class="c e">Empty</div><div class="c e">Empty</div><div class="c e">Empty</div><div class="c e">Empty</div><div class="c e">Empty</div><div class="c e">Empty</div><div class="c e">Empty</div><div class="lbl rh">R4</div><div class="c e">Empty</div><div class="c e">Empty</div><div class="c e">Empty</div><div class="c e">Empty</div><div class="c e">Empty</div><div class="c e">Empty</div><div class="c e">Empty</div><div class="c e">Empty</div><div class="c e">Empty</div><div class="lbl rh">R5</div><div class="c e">Empty</div><div class="c e">Empty</div><div class="c e">Empty</div><div class="c e">Empty</div><div class="c e">Empty</div><div class="c e">Empty</div><div class="c e">Empty</div><div class="c e">Empty</div><div class="c e">Empty</div><div class="lbl rh">R6</div><div class="c e">Empty</div><div class="c e">Empty</div><div class="c e">Empty</div><div class="c e">Empty</div><div class="c e">Empty</div><div class="c e">Empty</div><div class="c e">Empty</div><div class="c e">Empty</div><div class="c e">Empty</div><div class="lbl rh">R7</div><div class="c e">Empty</div><div class="c e">Empty</div><div class="c e">Empty</div><div class="c e">Empty</div><div class="c e">Empty</div><div class="c e">Empty</div><div class="c e">Empty</div><div class="c e">Empty</div><div class="c e">Empty</div></div></div></div>
  </div>
  <div style="position:absolute;left:21px;top:535px;width:1110px;height:100px;border-radius:12px;border:1px solid #2c2b2f;background:#1f1e22"></div>
  <div style="position:absolute;left:1143px;top:535px;width:400px;height:100px;border-radius:12px;border:1px dashed #333236"></div>
</div>

</div></body></html>
